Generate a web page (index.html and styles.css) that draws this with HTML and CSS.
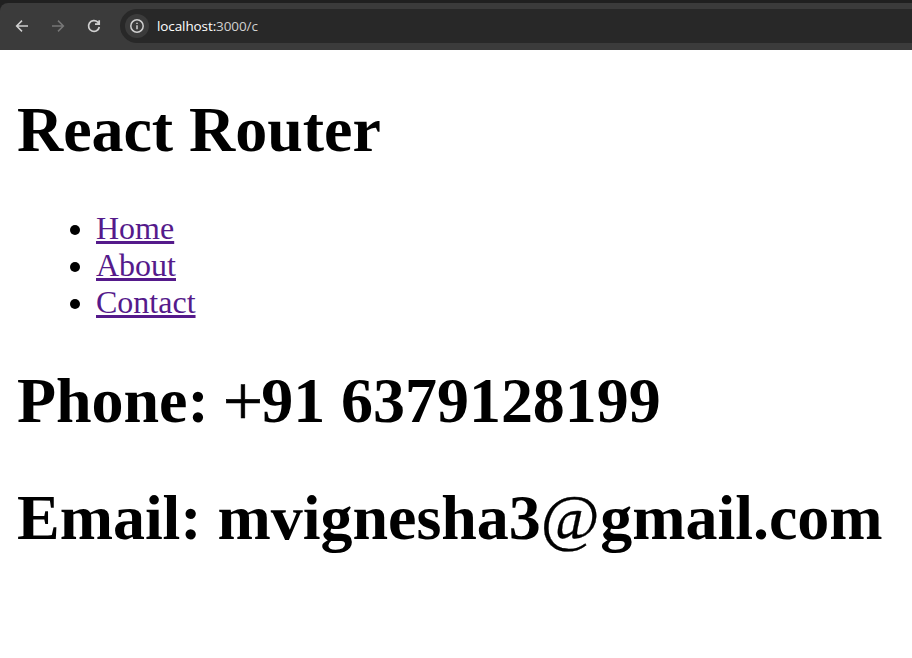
FILE: index.html
```
<!DOCTYPE html>
<html lang="en">
<head>
<meta charset="utf-8">
<title>React Router</title>
<link rel="stylesheet" href="styles.css">
</head>
<body>
<header class="frame">
  <div class="toolbar">
    <svg class="icon back" viewBox="0 0 16 16"><path d="M14 8H3M8 2.6L2.6 8 8 13.4"/></svg>
    <svg class="icon forward" viewBox="0 0 16 16"><path d="M2 8H13M8 2.6L13.4 8 8 13.4"/></svg>
    <svg class="icon reload" viewBox="0 0 16 16"><path d="M13.3 9a5.4 5.4 0 1 1-1.5-4.8L13 5.5M13.2 2.2V6.2H9"/></svg>
    <div class="address">
      <span class="site-info"><svg class="icon" viewBox="0 0 16 16"><circle cx="8" cy="8" r="6.2"/><path d="M8 7.2v4M8 4.7v1.4"/></svg></span>
      <span class="url">localhost:<span class="path">3000/c</span></span>
    </div>
  </div>
</header>
<main class="page">
  <h1>React Router</h1>
  <ul class="links">
    <li><a href="#">Home</a></li>
    <li><a href="#">About</a></li>
    <li><a href="#">Contact</a></li>
  </ul>
  <h1>Phone: <span class="plus">+</span>91 6379128199</h1>
  <h1>Email: mvignesha3<span class="at">@</span>gmail.com</h1>
</main>
</body>
</html>
```
FILE: styles.css
```
* { box-sizing: border-box; }
body { margin: 0; background: #fff; color: #000; font-family: "Liberation Serif", serif; overflow: hidden; }
.frame { height: 50px; padding-top: 3px; background: #202020; }
.toolbar { height: 47px; display: flex; align-items: center; padding: 0 0 1px 14px; background: #3b3b3b; border-radius: 8px 0 0 0; }
.icon { width: 16px; height: 16px; flex: none; fill: none; stroke: #d0d0d0; stroke-width: 1.5; }
.forward { margin-left: 20px; stroke: #777; }
.reload { margin-left: 20px; stroke-width: 1.7; }
.address { flex: 1; height: 34px; margin-left: 18px; padding-left: 5px; display: flex; align-items: center; background: #282828; border-radius: 17px 0 0 17px; }
.site-info { width: 24px; height: 24px; display: flex; align-items: center; justify-content: center; border-radius: 50%; background: #3b3b3b; }
.url { margin-left: 8px; font: 13.5px/20px "Open Sans", sans-serif; letter-spacing: -0.1px; color: #fff; }
.path { color: #d0d0d0; }
.page { padding: 0 17px; }
h1 { margin: 43px 0; font-size: 64px; line-height: 74px; letter-spacing: -0.04px; white-space: nowrap; }
.plus, .at { display: inline-block; font-weight: 400; }
.plus { width: 36.5px; transform: scale(1.12); -webkit-text-stroke: 0.6px #000; }
.at { width: 59.5px; -webkit-text-stroke: 0.3px #000; }
.links { margin: 43px 0; padding-left: 79px; font-size: 32px; line-height: 37px; }
.links a { color: #551a8b; text-underline-offset: 2px; text-decoration-thickness: 3px; }
```
